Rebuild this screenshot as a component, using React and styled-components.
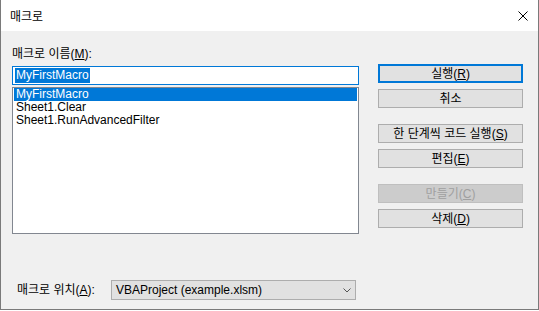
import React from "react";
import styled, { createGlobalStyle } from "styled-components";

const GlobalStyle = createGlobalStyle`
  html, body {
    margin: 0;
    padding: 0;
    background: #ffffff;
  }
  body {
    font-family: "Liberation Sans", "Noto Sans CJK KR", sans-serif;
    font-size: 12px;
    color: #000;
  }
`

const Window = styled.div`
  width: 539px;
  height: 310px;
  box-sizing: border-box;
  border: 1px solid #7a7a7a;
  border-top: none;
  background: #f0f0f0;
  display: flex;
  flex-direction: column;
`

const TitleBar = styled.div`
  height: 31px;
  background: #ffffff;
  display: flex;
  align-items: center;
  justify-content: space-between;
  padding: 0 10px 0 9px;
  flex-shrink: 0;
`

const TitleText = styled.span`
  font-family: "Noto Sans CJK KR", sans-serif;
  font-size: 12px;
  line-height: 14px;
`

const CloseIcon = styled.svg`
  width: 10px;
  height: 10px;
`

const Body = styled.div`
  flex: 1;
  display: flex;
  flex-direction: column;
  padding: 0 15px 0 11px;
`

const Main = styled.div`
  display: flex;
  gap: 19px;
`

const LeftCol = styled.div`
  width: 347px;
  display: flex;
  flex-direction: column;
  padding-top: 16px;
`

const Label = styled.div`
  height: 14px;
  line-height: 14px;
  white-space: nowrap;
`

const NameInput = styled.div`
  margin-top: 5px;
  height: 19px;
  box-sizing: border-box;
  border: 1px solid #0078d7;
  background: #fff;
  padding: 1px 2px;
  display: flex;
  align-items: center;
`

const Selected = styled.span`
  background: #0078d7;
  color: #fff;
  line-height: 15px;
  padding: 0 1px;
`

const ListBox = styled.div`
  margin-top: 2px;
  height: 147px;
  box-sizing: border-box;
  border: 1px solid #828790;
  background: #fff;
  padding: 0 1px;
`

const ListItem = styled.div`
  height: 13px;
  line-height: 13px;
  padding-left: 2px;
  white-space: nowrap;
  overflow: hidden;
  background: ${(p) => (p.$active ? "#0078d7" : "transparent")};
  color: ${(p) => (p.$active ? "#fff" : "#000")};
`

const RightCol = styled.div`
  width: 145px;
  display: flex;
  flex-direction: column;
  padding-top: 33px;
`

const ButtonGroup = styled.div`
  display: flex;
  flex-direction: column;
  gap: 6px;
  margin-bottom: 16px;
`

const Button = styled.div`
  height: 19px;
  box-sizing: border-box;
  display: flex;
  align-items: center;
  justify-content: center;
  background: ${(p) => (p.$disabled ? "#cccccc" : "#e1e1e1")};
  border: ${(p) =>
    p.$default ? "2px solid #0078d7" : p.$disabled ? "1px solid #bfbfbf" : "1px solid #adadad"};
  color: ${(p) => (p.$disabled ? "#a0a0a0" : "#000")};
  white-space: nowrap;
  line-height: 14px;
`

const BottomRow = styled.div`
  margin-top: 36px;
  display: flex;
  align-items: center;
`

const BottomLabel = styled.div`
  width: 99px;
  padding-left: 5px;
  box-sizing: border-box;
  white-space: nowrap;
  line-height: 14px;
`

const Select = styled.div`
  width: 245px;
  height: 20px;
  box-sizing: border-box;
  border: 1px solid #adadad;
  background: #e1e1e1;
  display: flex;
  align-items: center;
  justify-content: space-between;
  padding: 0 4px 0 4px;
  white-space: nowrap;
`

const Chevron = styled.svg`
  width: 8px;
  height: 5px;
`

const items = ["MyFirstMacro", "Sheet1.Clear", "Sheet1.RunAdvancedFilter"];

export default function App() {
  return (
    <>
      <GlobalStyle />
      <Window>
        <TitleBar>
          <TitleText>매크로</TitleText>
          <CloseIcon viewBox="0 0 10 10">
            <path d="M0.5 0.5 L9.5 9.5 M9.5 0.5 L0.5 9.5" stroke="#000" strokeWidth="1" fill="none" />
          </CloseIcon>
        </TitleBar>
        <Body>
          <Main>
            <LeftCol>
              <Label>
                매크로 이름(<u>M</u>):
              </Label>
              <NameInput>
                <Selected>MyFirstMacro</Selected>
              </NameInput>
              <ListBox>
                {items.map((it, i) => (
                  <ListItem key={it} $active={i === 0}>
                    {it}
                  </ListItem>
                ))}
              </ListBox>
            </LeftCol>
            <RightCol>
              <ButtonGroup>
                <Button $default>
                  실행(<u>R</u>)
                </Button>
                <Button>취소</Button>
              </ButtonGroup>
              <ButtonGroup>
                <Button>
                  한 단계씩 코드 실행(<u>S</u>)
                </Button>
                <Button>
                  편집(<u>E</u>)
                </Button>
              </ButtonGroup>
              <ButtonGroup>
                <Button $disabled>
                  만들기(<u>C</u>)
                </Button>
                <Button>
                  삭제(<u>D</u>)
                </Button>
              </ButtonGroup>
            </RightCol>
          </Main>
          <BottomRow>
            <BottomLabel>
              매크로 위치(<u>A</u>):
            </BottomLabel>
            <Select>
              <span>VBAProject (example.xlsm)</span>
              <Chevron viewBox="0 0 8 5">
                <path d="M0.5 0.5 L4 4 L7.5 0.5" stroke="#555" strokeWidth="1" fill="none" />
              </Chevron>
            </Select>
          </BottomRow>
        </Body>
      </Window>
    </>
  );
}
